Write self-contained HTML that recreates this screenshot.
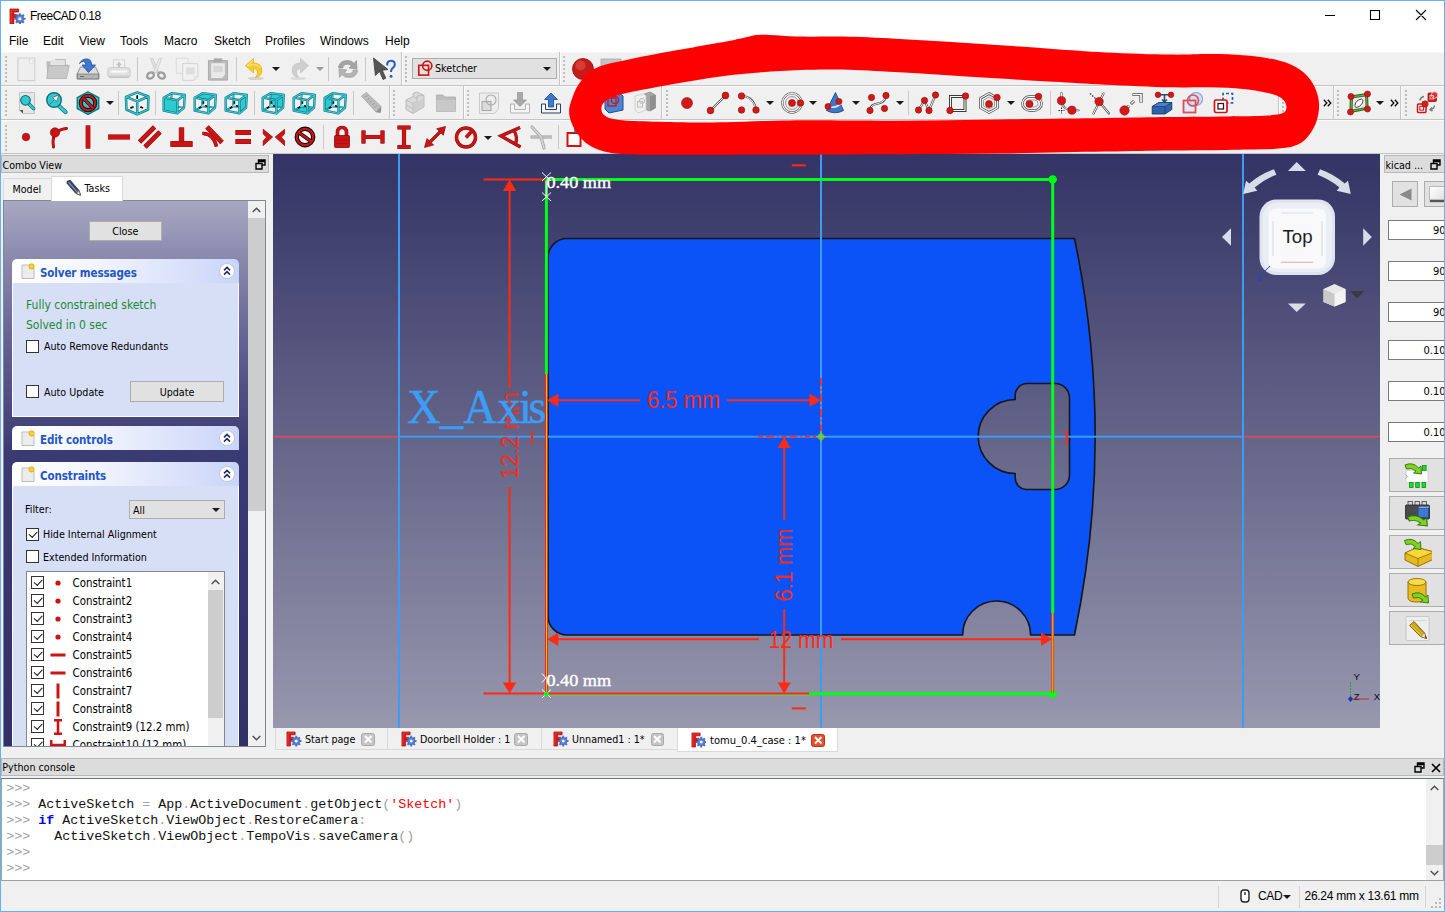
<!DOCTYPE html>
<html>
<head>
<meta charset="utf-8">
<title>FreeCAD 0.18</title>
<style>
*{box-sizing:border-box;margin:0;padding:0}
html,body{width:1445px;height:912px;overflow:hidden;background:#f0f0f0;font-family:"Liberation Sans","DejaVu Sans",sans-serif;font-size:11px;color:#000}
.abs{position:absolute}
#win{position:absolute;left:0;top:0;width:1445px;height:912px;background:#f0f0f0;overflow:hidden}
#bord{position:absolute;left:0;top:0;width:1445px;height:912px;border:1px solid #6ab0f0;z-index:50;pointer-events:none}
#title{position:absolute;left:1px;top:1px;width:1443px;height:30px;background:#fff}
#title .t{position:absolute;left:29px;top:7.3px;font-size:12px;line-height:16px;color:#000;letter-spacing:-0.5px}
#menu{position:absolute;left:1px;top:31px;width:1443px;height:21px;background:#fff}
#menu span{position:absolute;top:3px;font-size:12px;line-height:15px}
.sepH{position:absolute;left:1px;width:1443px;height:1px;background:#c9c9c9}
.tsep{position:absolute;width:1px;height:26px;background:#c6c6c6}
.grip{position:absolute;width:3px;height:26px;background-image:repeating-linear-gradient(to bottom,#b5b5b5 0,#b5b5b5 1px,transparent 1px,transparent 3px)}
.ic{position:absolute;width:24px;height:24px;overflow:visible}
.dd{position:absolute;width:0;height:0;margin-left:-0.500px;border-left:4px solid transparent;border-right:4px solid transparent;border-top:4.500px solid #1a1a1a}
.dd.g{border-top-color:#999}
</style>
</head>
<body>
<div id="win">
<!-- TITLE -->
<div id="title"><svg class="abs" style="left:8px;top:6.500px" width="16.500" height="16.500" viewBox="0 0 17 17"><use href="#fc"/></svg><span class="t">FreeCAD 0.18</span>
<svg class="abs" style="left:1319px;top:5px" width="120" height="20" viewBox="1320 6 120 20"><path d="M1325 15.500 H1335 M1370.500 10.500 H1379.500 V19.500 H1370.500 Z M1416 10 L1426 20 M1426 10 L1416 20" fill="none" stroke="#000" stroke-width="1.100"/></svg></div>
<!-- MENU -->
<div id="menu">
<span style="left:8px">File</span><span style="left:42px">Edit</span><span style="left:78px">View</span><span style="left:119px">Tools</span><span style="left:163px">Macro</span><span style="left:213px">Sketch</span><span style="left:264px">Profiles</span><span style="left:319px">Windows</span><span style="left:384px">Help</span>
</div>
<!-- TOOLBARS -->
<div id="tb"><style>.gr{position:absolute;width:3px;height:26px;width:2px;background-image:linear-gradient(to bottom,#bdbdbd 0,#bdbdbd 1.600px,transparent 1.600px);background-size:2px 4px}</style>
<div class="abs" style="left:1px;top:52px;width:1443px;height:1px;background:#f7f7f7"></div>
<div class="abs" style="left:1px;top:85.0px;width:1443px;height:1px;background:#c4c4c4"></div><div class="abs" style="left:1px;top:86.0px;width:1443px;height:1px;background:#fbfbfb"></div>
<div class="abs" style="left:1px;top:119.0px;width:1443px;height:1px;background:#c4c4c4"></div><div class="abs" style="left:1px;top:120.0px;width:1443px;height:1px;background:#fbfbfb"></div>
<div class="abs" style="left:1px;top:153px;width:1443px;height:1px;background:#c4c4c4"></div>
<div class="gr" style="left:4.5px;top:56.0px"></div>
<svg class="ic" style="left:14px;top:56.5px" viewBox="0 0 24 24"><g transform="translate(12 12) scale(1.16) translate(-12 -12)"><path d="M5 2.5 H19.5 V22 H5 Z" fill="#eeeeee" stroke="#d2d2d2" stroke-width="1"/><path d="M15 2.5 L19.5 7 H15 Z" fill="#f8f8f8" stroke="#d8d8d8" stroke-width=".6"/></g></svg>
<svg class="ic" style="left:45px;top:56.5px" viewBox="0 0 24 24"><g transform="translate(12 12) scale(1.12) translate(-12 -12)"><path d="M2.5 5 H9 L10.5 3 H20 V8 H22 L19.5 20.5 H3.5 Z" fill="#bdbdbd"/><path d="M6 4 H19 V9 H6 Z" fill="#e4e4e4"/><path d="M4.5 9 H23 L20.5 20.5 H2.8 Z" fill="#c9c9c9" stroke="#b0b0b0" stroke-width=".7"/></g></svg>
<svg class="ic" style="left:76.3px;top:56.5px" viewBox="0 0 24 24"><path d="M4.5 10 H19.5 L23 17 V22 H1 V17 Z" fill="#dcdcdc" stroke="#8e8e8e" stroke-width="1"/><path d="M1.5 17 H22.5 V21.8 H1.5 Z" fill="#b4b4b4" stroke="#7c7c7c" stroke-width=".8"/><path d="M4 19.5 H8" stroke="#666" stroke-width="1"/><path d="M3.5 6.5 Q6 1.5 11.5 2 Q15.5 2.5 15.5 8 H19.5 L12.5 15.5 L6 8 H10 Q10 5 7.5 4.5 Q5 4.5 3.5 6.5 Z" fill="#3b78d0" stroke="#1d4c9c" stroke-width=".8"/></svg>
<svg class="ic" style="left:107px;top:56.5px" viewBox="0 0 24 24"><g transform="translate(12 12) scale(1.02) translate(-12 -12)"><path d="M6.5 3 H17.5 V11 H6.5 Z" fill="#f2f2f2" stroke="#cfcfcf" stroke-width=".8"/><path d="M12 5 L15 8 H13.3 V10 H10.7 V8 H9 Z" fill="#c4c4c4"/><path d="M4 10.5 H20 Q23 10.5 23 14 V19 H1 V14 Q1 10.5 4 10.5 Z" fill="#e0e0e0" stroke="#c6c6c6" stroke-width=".8"/><path d="M2 19 H22 V21 H2 Z" fill="#c9c9c9"/><path d="M4 14.5 H20" stroke="#f8f8f8" stroke-width="2"/></g></svg>
<div class="abs" style="left:136.9px;top:56.5px;width:1px;height:24px;background:#c8c8c8"></div>
<svg class="ic" style="left:143.7px;top:56.5px" viewBox="0 0 24 24"><path d="M6.5 1.5 L9 1.5 L14.5 15 L11.8 16 Z" fill="#e2e2e2" stroke="#bdbdbd" stroke-width=".6"/><path d="M17.5 1.5 L15 1.5 L9.5 15 L12.2 16 Z" fill="#ececec" stroke="#bdbdbd" stroke-width=".6"/><ellipse cx="6.5" cy="18.5" rx="3.6" ry="2.8" transform="rotate(-30 6.5 18.5)" fill="none" stroke="#9c9c9c" stroke-width="2.3"/><ellipse cx="17.5" cy="18.5" rx="3.6" ry="2.8" transform="rotate(30 17.5 18.5)" fill="none" stroke="#9c9c9c" stroke-width="2.3"/></svg>
<svg class="ic" style="left:174.7px;top:56.5px" viewBox="0 0 24 24"><g transform="translate(12 12) scale(1.08) translate(-12 -12)"><path d="M2 2 H13 V16 H2 Z" fill="#f0f0f0" stroke="#d6d6d6" stroke-width=".8"/><path d="M8 7 H22 V19 L18.5 22.5 H8 Z" fill="#f1f1f1" stroke="#d0d0d0" stroke-width=".8"/><path d="M11 10.5 H19 V17 H11 Z" fill="#dddddd"/><path d="M18.5 22.5 V19 H22 Z" fill="#fafafa" stroke="#d0d0d0" stroke-width=".6"/></g></svg>
<svg class="ic" style="left:206px;top:56.5px" viewBox="0 0 24 24"><g transform="translate(12 12) scale(1.06) translate(-12 -12)"><path d="M3 4 H21 V22.5 H3 Z" fill="#bcbcbc" stroke="#a4a4a4" stroke-width=".8"/><path d="M5.5 6.5 H18.5 V17.5 L15.5 20.5 H5.5 Z" fill="#e9e9e9"/><path d="M8 2 H16 V5.5 H8 Z" fill="#a9a9a9"/><path d="M7.5 9 H16.5 V15 H7.5 Z" fill="#d6d6d6"/></g></svg>
<div class="abs" style="left:235.9px;top:56.5px;width:1px;height:24px;background:#c8c8c8"></div>
<svg class="ic" style="left:242.5px;top:56.5px" viewBox="0 0 24 24"><ellipse cx="13" cy="21.5" rx="8" ry="1.6" fill="#d2d2d2"/><path d="M10.5 1.5 L10.5 6 Q18.5 6 18.8 13 Q19 19.5 12.5 20.5 Q15.2 17.5 14.5 14.2 Q13.8 11.5 10.5 11.5 L10.5 16 L2.5 8.6 Z" fill="#f4cd2a" stroke="#e0b010" stroke-width=".7"/><path d="M10.5 3 L4 8.6 L10.5 7.5 Q16 7.5 17.5 11" fill="none" stroke="#fbe98a" stroke-width="1"/></svg>
<div class="dd" style="left:272.8px;top:67.0px"></div>
<svg class="ic" style="left:286.5px;top:56.5px" viewBox="0 0 24 24"><ellipse cx="11" cy="21.5" rx="8" ry="1.6" fill="#dcdcdc"/><path d="M13.5 1.5 L13.5 6 Q5.5 6 5.2 13 Q5 19.5 11.5 20.5 Q8.8 17.5 9.5 14.2 Q10.2 11.5 13.5 11.5 L13.5 16 L21.5 8.6 Z" fill="#cfcfcf" stroke="#c0c0c0" stroke-width=".7"/></svg>
<div class="dd g" style="left:316.0px;top:67.0px"></div>
<div class="abs" style="left:327.8px;top:56.5px;width:1px;height:24px;background:#c8c8c8"></div>
<svg class="ic" style="left:335.5px;top:56.5px" viewBox="0 0 24 24"><path d="M2.5 11 Q3 3.5 11.5 3.5 Q16 3.5 18 6.5 L20.5 3.5 L21 12 L13 11 L15.5 8.8 Q13.8 7 11.5 7.2 Q7 7.5 6.8 11 Z" fill="#a4a4a4" stroke="#8c8c8c" stroke-width=".6"/><path d="M21.5 13 Q21 20.5 12.5 20.5 Q8 20.5 6 17.5 L3.5 20.5 L3 12 L11 13 L8.5 15.2 Q10.2 17 12.5 16.8 Q17 16.5 17.2 13 Z" fill="#b4b4b4" stroke="#949494" stroke-width=".6"/></svg>
<div class="abs" style="left:365.2px;top:56.5px;width:1px;height:24px;background:#c8c8c8"></div>
<svg class="ic" style="left:372.3px;top:56.5px" viewBox="0 0 24 24"><path d="M1.5 1 L16 12.5 L10.3 13.2 L13.8 21.2 L11 22.5 L7.6 14.5 L3.4 18.5 Z" fill="#555" stroke="#3c3c3c" stroke-width=".8"/><path d="M15.2 8.5 Q14.8 3.8 19 3.8 Q22.8 3.8 22.8 7.5 Q22.8 9.8 20.4 11.4 Q19 12.4 19 15" fill="none" stroke="#2a5fc0" stroke-width="2.1"/><circle cx="19" cy="19.3" r="1.5" fill="#2a5fc0"/></svg>
<div class="abs" style="left:401.2px;top:52.0px;width:1px;height:33px;background:#c4c4c4"></div><div class="abs" style="left:402.2px;top:52.0px;width:1px;height:33px;background:#fbfbfb"></div>
<div class="gr" style="left:405.2px;top:56.0px"></div>
<div class="abs" style="left:559.0px;top:52.0px;width:1px;height:33px;background:#c4c4c4"></div><div class="abs" style="left:560.0px;top:52.0px;width:1px;height:33px;background:#fbfbfb"></div>
<div class="gr" style="left:563.0px;top:56.0px"></div>
<svg class="ic" style="left:571px;top:56.5px" viewBox="0 0 24 24"><circle cx="12" cy="12" r="10.500" fill="#c81a1a" stroke="#8c1010" stroke-width=".8"/><circle cx="9.5" cy="8.5" r="5" fill="#e85a4a" opacity=".55"/></svg>
<svg class="ic" style="left:599px;top:56.5px" viewBox="0 0 24 24"><rect x="2" y="2" width="20" height="20" fill="#c4c4c4" stroke="#aaa" stroke-width=".8"/></svg>
<div class="gr" style="left:4.5px;top:90.0px"></div>
<svg class="ic" style="left:14px;top:90.5px" viewBox="0 0 24 24"><path d="M5.5 1.5 H20.5 V22.5 H9 L5.5 19 Z" fill="#e6e6e6" stroke="#bdbdbd" stroke-width=".9"/><path d="M5.5 19 H9 V22.5 Z" fill="#555"/><path d="M14 12 L19.5 17.5" stroke="#14707c" stroke-width="3.6" stroke-linecap="round"/><path d="M14 12 L19.5 17.5" stroke="#2fc9d2" stroke-width="2.2" stroke-linecap="round"/><circle cx="11.5" cy="9.3" r="4.8" fill="#2fc9d2" stroke="#14707c" stroke-width="1.2"/></svg>
<svg class="ic" style="left:44px;top:90.5px" viewBox="0 0 24 24"><path d="M14.5 14.5 L21.5 21" stroke="#14707c" stroke-width="4.2" stroke-linecap="round"/><path d="M14.5 14.5 L21.5 21" stroke="#2fc9d2" stroke-width="2.6" stroke-linecap="round"/><circle cx="10" cy="9" r="7.3" fill="#2fc9d2" stroke="#14707c" stroke-width="1.4"/><path d="M5.5 13.5 L10.5 8.5 L8.5 6.5 L15 4 L12.5 10.5 L10.8 8.8" fill="#f4f4f4" stroke="#555" stroke-width=".7"/></svg>
<svg class="ic" style="left:76px;top:90.5px" viewBox="0 0 24 24"><path d="M12 0.8 L22.8 6.6 V17.6 L12 23.4 L1.2 17.6 V6.6 Z" fill="#2fc9d2" stroke="#14707c" stroke-width="1.3"/><circle cx="12" cy="12" r="7.2" fill="none" stroke="#1a1a1a" stroke-width="4.2"/><circle cx="12" cy="12" r="7.2" fill="none" stroke="#d21616" stroke-width="2"/><path d="M7 7 L17 17" stroke="#1a1a1a" stroke-width="3.6"/><path d="M7 7 L17 17" stroke="#d21616" stroke-width="2.2"/></svg>
<div class="dd" style="left:106.1px;top:101.0px"></div>
<div class="abs" style="left:117.8px;top:90.5px;width:1px;height:24px;background:#c8c8c8"></div>
<svg class="ic" style="left:125px;top:90.5px" viewBox="0 0 24 24"><path d="M12.2 1.400 L23.400 5.500 L23 18.500 L12.200 23.300 L1.400 18.500 L1 5.900 Z M1 5.900 L12.200 10.400 L23.400 5.500 M12.200 10.400 V23.300" fill="none" stroke="#14707c" stroke-width="2.500" stroke-linejoin="round"/><path d="M12.200 1.400 L23.400 5.500 L23 18.500 L12.200 23.300 L1.400 18.500 L1 5.900 Z M1 5.900 L12.200 10.400 L23.400 5.500 M12.200 10.400 V23.300" fill="none" stroke="#2fc9d2" stroke-width="1.300" stroke-linejoin="round"/><path d="M12.200 4.300 V8 M5.400 17.100 L8.600 15.700 M15.300 15.900 L18 17" stroke="#0a0a0a" stroke-width="1.700"/></svg>
<div class="abs" style="left:154.8px;top:90.5px;width:1px;height:24px;background:#c8c8c8"></div>
<svg class="ic" style="left:162px;top:90.5px" viewBox="0 0 24 24"><g transform="translate(12 12.300) scale(0.930) translate(-12 -12.300)"><path d="M9.4 1.4 L9 15.6 L0.9 20.2 M9 15.6 L22.8 17" fill="none" stroke="#14707c" stroke-width="2"/><path d="M9.4 1.4 L9 15.6 L0.9 20.2 M9 15.6 L22.8 17" fill="none" stroke="#2fc9d2" stroke-width="1"/><path d="M0.9 6.3 L15.7 9 L15.7 23.2 L0.9 20.2 Z" fill="#2fc9d2"/><path d="M0.9 6.3 L15.7 9 L15.7 23.2 L0.9 20.2 Z M0.9 6.3 L15.7 9 L23.6 3.2 L9.4 1.4 Z M15.7 9 L23.6 3.2 L22.8 17 L15.7 23.2 Z" fill="none" stroke="#14707c" stroke-width="2.500" stroke-linejoin="round"/><path d="M0.9 6.3 L15.7 9 L15.7 23.2 L0.9 20.2 Z M0.9 6.3 L15.7 9 L23.6 3.2 L9.4 1.4 Z M15.7 9 L23.6 3.2 L22.8 17 L15.7 23.2 Z" fill="none" stroke="#2fc9d2" stroke-width="1.300" stroke-linejoin="round"/></g></svg>
<svg class="ic" style="left:193px;top:90.5px" viewBox="0 0 24 24"><g transform="translate(12 12.300) scale(0.930) translate(-12 -12.300)"><path d="M9.4 1.4 L9 15.6 L0.9 20.2 M9 15.6 L22.8 17" fill="none" stroke="#14707c" stroke-width="2"/><path d="M9.4 1.4 L9 15.6 L0.9 20.2 M9 15.6 L22.8 17" fill="none" stroke="#2fc9d2" stroke-width="1"/><path d="M10.4 14.4 V10.6 M10.4 14.4 L5.600 17.500 M10.400 14.400 L14 15.400" stroke="#9fd8f0" stroke-width="1.100" fill="none"/><path d="M10.300 12.800 V10.200 M8.100 16 L5.400 17.600 M12 14.900 L14.200 15.500" stroke="#0a0a0a" stroke-width="1.700" fill="none"/><path d="M0.9 6.3 L15.7 9 L23.6 3.2 L9.4 1.4 Z" fill="#2fc9d2"/><path d="M0.9 6.3 L15.7 9 L15.7 23.2 L0.9 20.2 Z M0.9 6.3 L15.7 9 L23.6 3.2 L9.4 1.4 Z M15.7 9 L23.6 3.2 L22.8 17 L15.7 23.2 Z" fill="none" stroke="#14707c" stroke-width="2.500" stroke-linejoin="round"/><path d="M0.9 6.3 L15.7 9 L15.7 23.2 L0.9 20.2 Z M0.9 6.3 L15.7 9 L23.6 3.2 L9.4 1.4 Z M15.7 9 L23.6 3.2 L22.8 17 L15.7 23.2 Z" fill="none" stroke="#2fc9d2" stroke-width="1.300" stroke-linejoin="round"/></g></svg>
<svg class="ic" style="left:223.6px;top:90.5px" viewBox="0 0 24 24"><g transform="translate(12 12.300) scale(0.930) translate(-12 -12.300)"><path d="M9.4 1.4 L9 15.6 L0.9 20.2 M9 15.6 L22.8 17" fill="none" stroke="#14707c" stroke-width="2"/><path d="M9.4 1.4 L9 15.6 L0.9 20.2 M9 15.6 L22.8 17" fill="none" stroke="#2fc9d2" stroke-width="1"/><path d="M10.4 14.4 V10.6 M10.4 14.4 L5.600 17.500 M10.400 14.400 L14 15.400" stroke="#9fd8f0" stroke-width="1.100" fill="none"/><path d="M10.300 12.800 V10.200 M8.100 16 L5.400 17.600 M12 14.900 L14.200 15.500" stroke="#0a0a0a" stroke-width="1.700" fill="none"/><path d="M15.7 9 L23.6 3.2 L22.8 17 L15.7 23.2 Z" fill="#2fc9d2"/><path d="M0.9 6.3 L15.7 9 L15.7 23.2 L0.9 20.2 Z M0.9 6.3 L15.7 9 L23.6 3.2 L9.4 1.4 Z M15.7 9 L23.6 3.2 L22.8 17 L15.7 23.2 Z" fill="none" stroke="#14707c" stroke-width="2.500" stroke-linejoin="round"/><path d="M0.9 6.3 L15.7 9 L15.7 23.2 L0.9 20.2 Z M0.9 6.3 L15.7 9 L23.6 3.2 L9.4 1.4 Z M15.7 9 L23.6 3.2 L22.8 17 L15.7 23.2 Z" fill="none" stroke="#2fc9d2" stroke-width="1.300" stroke-linejoin="round"/></g></svg>
<div class="abs" style="left:253.5px;top:90.5px;width:1px;height:24px;background:#c8c8c8"></div>
<svg class="ic" style="left:260.8px;top:90.5px" viewBox="0 0 24 24"><g transform="translate(12 12.300) scale(0.930) translate(-12 -12.300)"><path d="M9.4 1.4 L23.6 3.2 L22.8 17 L9 15.6 Z" fill="#2fc9d2"/><path d="M9.4 1.4 L9 15.6 L0.9 20.2 M9 15.6 L22.8 17" fill="none" stroke="#14707c" stroke-width="2"/><path d="M9.4 1.4 L9 15.6 L0.9 20.2 M9 15.6 L22.8 17" fill="none" stroke="#2fc9d2" stroke-width="1"/><path d="M10.4 14.4 V10.6 M10.4 14.4 L5.600 17.500 M10.400 14.400 L14 15.400" stroke="#9fd8f0" stroke-width="1.100" fill="none"/><path d="M10.300 12.800 V10.200 M8.100 16 L5.400 17.600 M12 14.900 L14.200 15.500" stroke="#0a0a0a" stroke-width="1.700" fill="none"/><path d="M0.9 6.3 L15.7 9 L15.7 23.2 L0.9 20.2 Z M0.9 6.3 L15.7 9 L23.6 3.2 L9.4 1.4 Z M15.7 9 L23.6 3.2 L22.8 17 L15.7 23.2 Z" fill="none" stroke="#14707c" stroke-width="2.500" stroke-linejoin="round"/><path d="M0.9 6.3 L15.7 9 L15.7 23.2 L0.9 20.2 Z M0.9 6.3 L15.7 9 L23.6 3.2 L9.4 1.4 Z M15.7 9 L23.6 3.2 L22.8 17 L15.7 23.2 Z" fill="none" stroke="#2fc9d2" stroke-width="1.300" stroke-linejoin="round"/></g></svg>
<svg class="ic" style="left:291.6px;top:90.5px" viewBox="0 0 24 24"><g transform="translate(12 12.300) scale(0.930) translate(-12 -12.300)"><path d="M0.9 20.2 L15.7 23.2 L22.8 17 L9 15.6 Z" fill="#2fc9d2"/><path d="M9.4 1.4 L9 15.6 L0.9 20.2 M9 15.6 L22.8 17" fill="none" stroke="#14707c" stroke-width="2"/><path d="M9.4 1.4 L9 15.6 L0.9 20.2 M9 15.6 L22.8 17" fill="none" stroke="#2fc9d2" stroke-width="1"/><path d="M10.4 14.4 V10.6 M10.4 14.4 L5.600 17.500 M10.400 14.400 L14 15.400" stroke="#9fd8f0" stroke-width="1.100" fill="none"/><path d="M10.300 12.800 V10.200 M8.100 16 L5.400 17.600 M12 14.900 L14.200 15.500" stroke="#0a0a0a" stroke-width="1.700" fill="none"/><path d="M0.9 6.3 L15.7 9 L15.7 23.2 L0.9 20.2 Z M0.9 6.3 L15.7 9 L23.6 3.2 L9.4 1.4 Z M15.7 9 L23.6 3.2 L22.8 17 L15.7 23.2 Z" fill="none" stroke="#14707c" stroke-width="2.500" stroke-linejoin="round"/><path d="M0.9 6.3 L15.7 9 L15.7 23.2 L0.9 20.2 Z M0.9 6.3 L15.7 9 L23.6 3.2 L9.4 1.4 Z M15.7 9 L23.6 3.2 L22.8 17 L15.7 23.2 Z" fill="none" stroke="#2fc9d2" stroke-width="1.300" stroke-linejoin="round"/></g></svg>
<svg class="ic" style="left:322.6px;top:90.5px" viewBox="0 0 24 24"><g transform="translate(12 12.300) scale(0.930) translate(-12 -12.300)"><path d="M0.9 6.3 L9.4 1.4 L9 15.6 L0.9 20.2 Z" fill="#2fc9d2"/><path d="M9.4 1.4 L9 15.6 L0.9 20.2 M9 15.6 L22.8 17" fill="none" stroke="#14707c" stroke-width="2"/><path d="M9.4 1.4 L9 15.6 L0.9 20.2 M9 15.6 L22.8 17" fill="none" stroke="#2fc9d2" stroke-width="1"/><path d="M10.4 14.4 V10.6 M10.4 14.4 L5.600 17.500 M10.400 14.400 L14 15.400" stroke="#9fd8f0" stroke-width="1.100" fill="none"/><path d="M10.300 12.800 V10.200 M8.100 16 L5.400 17.600 M12 14.900 L14.200 15.500" stroke="#0a0a0a" stroke-width="1.700" fill="none"/><path d="M0.9 6.3 L15.7 9 L15.7 23.2 L0.9 20.2 Z M0.9 6.3 L15.7 9 L23.6 3.2 L9.4 1.4 Z M15.7 9 L23.6 3.2 L22.8 17 L15.7 23.2 Z" fill="none" stroke="#14707c" stroke-width="2.500" stroke-linejoin="round"/><path d="M0.9 6.3 L15.7 9 L15.7 23.2 L0.9 20.2 Z M0.9 6.3 L15.7 9 L23.6 3.2 L9.4 1.4 Z M15.7 9 L23.6 3.2 L22.8 17 L15.7 23.2 Z" fill="none" stroke="#2fc9d2" stroke-width="1.300" stroke-linejoin="round"/></g></svg>
<div class="abs" style="left:352.7px;top:90.5px;width:1px;height:24px;background:#c8c8c8"></div>
<svg class="ic" style="left:359px;top:90.5px" viewBox="0 0 24 24"><path d="M2.5 5 L7.5 1.5 L22 15.5 L21.5 21.5 L17 21 Z" fill="#bdbdbd" stroke="#a2a2a2" stroke-width=".8"/><path d="M17 21 L21.5 21.5 L22 15.5 Z" fill="#8f8f8f"/><path d="M6 6.5 L8 4.5 M8.5 9 L10.5 7 M11 11.5 L13 9.5 M13.5 14 L15.5 12 M16 16.5 L18 14.5" stroke="#8c8c8c" stroke-width=".9"/></svg>
<div class="abs" style="left:389.1px;top:86.0px;width:1px;height:33px;background:#c4c4c4"></div><div class="abs" style="left:390.1px;top:86.0px;width:1px;height:33px;background:#fbfbfb"></div>
<div class="gr" style="left:393.1px;top:90.0px"></div>
<svg class="ic" style="left:403px;top:90.5px" viewBox="0 0 24 24"><path d="M3 9 L10 5.5 V2.5 L14 1 L21 4.5 V16 L10 22.5 L3 18.5 Z" fill="#dadada" stroke="#b4b4b4" stroke-width=".9"/><path d="M3 9 L10 12.5 V22.5 M10 12.5 L14 10.5 V5 L21 4.5 M10 5.5 L14 7.5 M3 14 L10 17.5" fill="none" stroke="#b9b9b9" stroke-width=".8"/><path d="M14 10.500 L21 7.5 V16 L10 22.5 V12.5 Z" fill="#c9c9c9" opacity=".7"/></svg>
<svg class="ic" style="left:434px;top:90.5px" viewBox="0 0 24 24"><path d="M2.5 4 H9 L10.500 6 H21.5 V20.5 H2.5 Z" fill="#bdbdbd" stroke="#ababab" stroke-width=".8"/><path d="M2.5 9 H21.5 V20.5 H2.5 Z" fill="#c8c8c8"/></svg>
<div class="abs" style="left:463.1px;top:86.0px;width:1px;height:33px;background:#c4c4c4"></div><div class="abs" style="left:464.1px;top:86.0px;width:1px;height:33px;background:#fbfbfb"></div>
<div class="gr" style="left:467.1px;top:90.0px"></div>
<svg class="ic" style="left:477px;top:90.5px" viewBox="0 0 24 24"><path d="M2.5 2 H21.5 V18 L17.5 22.5 H2.5 Z" fill="#ededed" stroke="#c6c6c6" stroke-width=".9"/><rect x="5" y="10.500" width="9" height="9" fill="#dcdcdc" stroke="#a8a8a8" stroke-width="1.1"/><circle cx="14" cy="9" r="5" fill="none" stroke="#a8a8a8" stroke-width="1.1"/></svg>
<svg class="ic" style="left:508px;top:90.5px" viewBox="0 0 24 24"><path d="M2.5 13 H6.5 V18.5 H17.5 V13 H21.5 V22 H2.5 Z" fill="#f4f4f4" stroke="#b4b4b4" stroke-width="1"/><path d="M9.500 1.500 H14.500 V9 H18.500 L12 15.500 L5.500 9 H9.500 Z" fill="#a9a9a9" stroke="#929292" stroke-width=".7"/></svg>
<svg class="ic" style="left:539px;top:90.5px" viewBox="0 0 24 24"><path d="M2.500 13 H6.500 V18.500 H17.500 V13 H21.500 V22 H2.500 Z" fill="#f4f4f4" stroke="#2c3e5c" stroke-width="1"/><path d="M9.500 16 H14.500 V8.500 H18.500 L12 2 L5.500 8.500 H9.500 Z" fill="#3b7ad0" stroke="#1c468c" stroke-width=".8"/></svg>
<svg class="ic" style="left:601.5px;top:90.5px" viewBox="0 0 24 24"><path d="M3 4 L17 2 L21 5 V19 L7 22 L3 18 Z" fill="#4a86d4" stroke="#1e4a94" stroke-width="1"/><rect x="6" y="7" width="8" height="8" fill="none" stroke="#cc1414" stroke-width="1.300"/><circle cx="13" cy="9" r="3.600" fill="none" stroke="#cc1414" stroke-width="1.300"/></svg>
<svg class="ic" style="left:632.5px;top:90.5px" viewBox="0 0 24 24"><path d="M11 3 L17 1 L22.500 4 V17 L17 20 L11 18 Z" fill="#a6a6a6" stroke="#8c8c8c" stroke-width=".7"/><path d="M17 5 L22.500 4 V17 L17 20 Z" fill="#8f8f8f"/><path d="M2 5 L11 3 L13 5 V19 L5 22 L2 19 Z" fill="#f0f0f0" stroke="#c9c9c9" stroke-width=".8"/><rect x="4.500" y="10.500" width="5" height="5.500" fill="none" stroke="#bdbdbd" stroke-width="1"/><circle cx="9" cy="10" r="2.600" fill="none" stroke="#bdbdbd" stroke-width="1"/></svg>
<div class="abs" style="left:661.1px;top:86.0px;width:1px;height:33px;background:#c4c4c4"></div><div class="abs" style="left:662.1px;top:86.0px;width:1px;height:33px;background:#fbfbfb"></div>
<div class="gr" style="left:665.5px;top:90.0px"></div>
<svg class="ic" style="left:674.5px;top:90.5px" viewBox="0 0 24 24"><circle cx="12" cy="12" r="5.5" fill="#d41818" stroke="#8a0e0e" stroke-width="0.6"/></svg>
<svg class="ic" style="left:705.5px;top:90.5px" viewBox="0 0 24 24"><path d="M4.500 19.500 L19.500 4.500" fill="none" stroke="#4a4a4a" stroke-width="2.15" stroke-linecap="round"/><path d="M4.500 19.500 L19.500 4.500" fill="none" stroke="#f8f8f8" stroke-width="1" stroke-linecap="round"/><circle cx="4.5" cy="19.5" r="3.39" fill="#d41818" stroke="#8a0e0e" stroke-width="0.6"/><circle cx="19.5" cy="4.5" r="3.39" fill="#d41818" stroke="#8a0e0e" stroke-width="0.6"/></svg>
<svg class="ic" style="left:736.5px;top:90.5px" viewBox="0 0 24 24"><path d="M4.500 5 Q17 5.500 19 19" fill="none" stroke="#4a4a4a" stroke-width="2.15" stroke-linecap="round"/><path d="M4.500 5 Q17 5.500 19 19" fill="none" stroke="#f8f8f8" stroke-width="1" stroke-linecap="round"/><circle cx="4.5" cy="5" r="3.28" fill="#d41818" stroke="#8a0e0e" stroke-width="0.6"/><circle cx="19" cy="19" r="3.28" fill="#d41818" stroke="#8a0e0e" stroke-width="0.6"/><circle cx="4.5" cy="19" r="3.28" fill="#d41818" stroke="#8a0e0e" stroke-width="0.6"/></svg>
<div class="dd" style="left:766.5px;top:101.0px"></div>
<svg class="ic" style="left:779.5px;top:90.5px" viewBox="0 0 24 24"><circle cx="12" cy="12" r="9.600" fill="none" stroke="#4a4a4a" stroke-width="2.200"/><circle cx="12" cy="12" r="9.600" fill="none" stroke="#f8f8f8" stroke-width="1.100"/><circle cx="12" cy="12" r="6.400" fill="none" stroke="#7c7c7c" stroke-width=".8"/><circle cx="12" cy="12" r="3.51" fill="#d41818" stroke="#8a0e0e" stroke-width="0.6"/><circle cx="20.5" cy="12" r="3.28" fill="#d41818" stroke="#8a0e0e" stroke-width="0.6"/></svg>
<div class="dd" style="left:809.8px;top:101.0px"></div>
<svg class="ic" style="left:822.5px;top:90.5px" viewBox="0 0 24 24"><path d="M12.500 1.500 L20.500 19.500 Q12 24 3.500 19.500 Z" fill="#3e78c8" stroke="#1f4788" stroke-width=".9"/><path d="M5 15 Q13 19 19.500 10.500" fill="none" stroke="#eef2fa" stroke-width="1.600"/><circle cx="5" cy="15.5" r="3.04" fill="#d41818" stroke="#8a0e0e" stroke-width="0.6"/><circle cx="16" cy="10.5" r="3.04" fill="#d41818" stroke="#8a0e0e" stroke-width="0.6"/></svg>
<div class="dd" style="left:852.8px;top:101.0px"></div>
<svg class="ic" style="left:865.8px;top:90.5px" viewBox="0 0 24 24"><path d="M4 19.500 C4 9 19 16.500 20 4.500" fill="none" stroke="#4a4a4a" stroke-width="2.15" stroke-linecap="round"/><path d="M4 19.500 C4 9 19 16.500 20 4.500" fill="none" stroke="#f8f8f8" stroke-width="1" stroke-linecap="round"/><circle cx="4" cy="19.5" r="3.16" fill="#d41818" stroke="#8a0e0e" stroke-width="0.6"/><circle cx="20" cy="4.5" r="3.16" fill="#d41818" stroke="#8a0e0e" stroke-width="0.6"/><circle cx="5.5" cy="6.5" r="3.16" fill="#d41818" stroke="#8a0e0e" stroke-width="0.6"/><circle cx="18.5" cy="17.5" r="3.16" fill="#d41818" stroke="#8a0e0e" stroke-width="0.6"/></svg>
<div class="dd" style="left:896.0px;top:101.0px"></div>
<div class="abs" style="left:908.3px;top:90.5px;width:1px;height:24px;background:#c8c8c8"></div>
<svg class="ic" style="left:915.3px;top:90.5px" viewBox="0 0 24 24"><path d="M3.500 19 L9.500 9.500 L14 19.500 L20.500 4" fill="none" stroke="#4a4a4a" stroke-width="2.15" stroke-linecap="round"/><path d="M3.500 19 L9.500 9.500 L14 19.500 L20.500 4" fill="none" stroke="#f8f8f8" stroke-width="1" stroke-linecap="round"/><circle cx="3.5" cy="19" r="3.16" fill="#d41818" stroke="#8a0e0e" stroke-width="0.6"/><circle cx="9.5" cy="9.5" r="3.16" fill="#d41818" stroke="#8a0e0e" stroke-width="0.6"/><circle cx="14" cy="19.5" r="3.16" fill="#d41818" stroke="#8a0e0e" stroke-width="0.6"/><circle cx="20.5" cy="4" r="3.16" fill="#d41818" stroke="#8a0e0e" stroke-width="0.6"/></svg>
<svg class="ic" style="left:946.3px;top:90.5px" viewBox="0 0 24 24"><path d="M4.500 5.500 H19 V19.500 H4.500 Z" fill="none" stroke="#3a3a3a" stroke-width="3"/><path d="M4.500 5.500 H19 V19.500 H4.500 Z" fill="none" stroke="#fafafa" stroke-width="1.100"/><circle cx="4" cy="19.5" r="3.28" fill="#d41818" stroke="#8a0e0e" stroke-width="0.6"/><circle cx="19.5" cy="5" r="3.28" fill="#d41818" stroke="#8a0e0e" stroke-width="0.6"/></svg>
<svg class="ic" style="left:977px;top:90.5px" viewBox="0 0 24 24"><path d="M12 2.500 L20.500 7.300 V16.800 L12 21.500 L3.500 16.800 V7.300 Z" fill="none" stroke="#4a4a4a" stroke-width="2.600"/><path d="M12 2.500 L20.500 7.300 V16.800 L12 21.500 L3.500 16.800 V7.300 Z" fill="none" stroke="#f8f8f8" stroke-width="1.200"/><path d="M12 6 L17.500 9.200 V15 L12 18 L6.500 15 V9.200 Z" fill="none" stroke="#8a8a8a" stroke-width=".8"/><circle cx="12" cy="13" r="3.51" fill="#d41818" stroke="#8a0e0e" stroke-width="0.6"/><circle cx="20" cy="6.5" r="3.28" fill="#d41818" stroke="#8a0e0e" stroke-width="0.6"/></svg>
<div class="dd" style="left:1007.3px;top:101.0px"></div>
<svg class="ic" style="left:1020px;top:90.5px" viewBox="0 0 24 24"><rect x="2.500" y="5.500" width="19" height="14" rx="7" ry="7" fill="none" stroke="#4a4a4a" stroke-width="2.600"/><rect x="2.500" y="5.500" width="19" height="14" rx="7" ry="7" fill="none" stroke="#f8f8f8" stroke-width="1.200"/><rect x="6" y="9" width="12" height="7" rx="3.500" ry="3.500" fill="none" stroke="#8a8a8a" stroke-width=".8"/><circle cx="9.5" cy="13" r="3.51" fill="#d41818" stroke="#8a0e0e" stroke-width="0.6"/><circle cx="18.5" cy="5.5" r="3.28" fill="#d41818" stroke="#8a0e0e" stroke-width="0.6"/></svg>
<div class="abs" style="left:1050.3px;top:90.5px;width:1px;height:24px;background:#c8c8c8"></div>
<svg class="ic" style="left:1056px;top:90.5px" viewBox="0 0 24 24"><path d="M5.500 2 V9.500 Q6 18.500 16 19.200 H22.500" fill="none" stroke="#4a4a4a" stroke-width="2.15" stroke-linecap="round"/><path d="M5.500 2 V9.500 Q6 18.500 16 19.200 H22.500" fill="none" stroke="#f8f8f8" stroke-width="1" stroke-linecap="round"/><path d="M2.500 19.500 H8.500 M5.500 16.500 V22.500" stroke="#222" stroke-width="1" stroke-dasharray="1.500 1"/><circle cx="5.5" cy="9.7" r="4.09" fill="#d41818" stroke="#8a0e0e" stroke-width="0.6"/><circle cx="15.9" cy="19.2" r="4.09" fill="#d41818" stroke="#8a0e0e" stroke-width="0.6"/></svg>
<svg class="ic" style="left:1087px;top:90.5px" viewBox="0 0 24 24"><path d="M12 10.500 L22 22.500" fill="none" stroke="#4a4a4a" stroke-width="2.15" stroke-linecap="round"/><path d="M12 10.500 L22 22.500" fill="none" stroke="#f8f8f8" stroke-width="1" stroke-linecap="round"/><path d="M16.500 2.500 L6.500 22.500" fill="none" stroke="#4a4a4a" stroke-width="2.15" stroke-linecap="round"/><path d="M16.500 2.500 L6.500 22.500" fill="none" stroke="#f8f8f8" stroke-width="1" stroke-linecap="round"/><path d="M3 2.500 L10 9" stroke="#333" stroke-width="1.300" stroke-dasharray="1.500 1.500"/><circle cx="12.1" cy="10.6" r="4.21" fill="#d41818" stroke="#8a0e0e" stroke-width="0.6"/></svg>
<svg class="ic" style="left:1118.5px;top:90.5px" viewBox="0 0 24 24"><path d="M7 18 L16 9" stroke="#4a4a4a" stroke-width="2.900" stroke-dasharray="4.500 2.500"/><path d="M7.500 17.500 L15.500 9.500" stroke="#f8f8f8" stroke-width="1.400" stroke-dasharray="3.800 3.200"/><path d="M13.500 3.500 H22 V11.500" fill="none" stroke="#4a4a4a" stroke-width="3.200"/><path d="M14 3.500 H22 V11" fill="none" stroke="#f8f8f8" stroke-width="1.700"/><circle cx="5.5" cy="19.5" r="4.68" fill="#d41818" stroke="#8a0e0e" stroke-width="0.6"/></svg>
<svg class="ic" style="left:1149.5px;top:90.5px" viewBox="0 0 24 24"><path d="M2.200 15.500 L9 11.500 H21.800 V18.500 L15 23 H2.200 Z" fill="#2f62a8" stroke="#1a3a6e" stroke-width=".9"/><path d="M2.200 15.500 L9 11.500 H21.800 L15 15.500 Z" fill="#4c82cc" stroke="#1a3a6e" stroke-width=".7"/><path d="M15 15.500 V23" stroke="#1a3a6e" stroke-width=".8"/><path d="M8 3.800 H21 M14.500 3.800 V10.500 M12 8.500 L14.500 11 L17 8.500" fill="none" stroke="#2c4a74" stroke-width="1.600"/><circle cx="8" cy="3.8" r="2.81" fill="#d41818" stroke="#8a0e0e" stroke-width="0.6"/><circle cx="21" cy="3.8" r="2.81" fill="#d41818" stroke="#8a0e0e" stroke-width="0.6"/></svg>
<svg class="ic" style="left:1180.5px;top:90.5px" viewBox="0 0 24 24"><circle cx="15" cy="8" r="6.500" fill="#cfe0f6" stroke="#7fa6dc" stroke-width="1.200"/><rect x="2.500" y="9.500" width="12" height="12" fill="#dbe6f6" fill-opacity=".7" stroke="#dc4e58" stroke-width="1.800"/><circle cx="12" cy="9.500" r="5.500" fill="none" stroke="#dc4e58" stroke-width="1.600"/></svg>
<svg class="ic" style="left:1212px;top:90.5px" viewBox="0 0 24 24"><path d="M11 9.500 V2.500 H20.500 V12 H14" fill="none" stroke="#2a5aa8" stroke-width="1.600" stroke-dasharray="3 2"/><rect x="2.500" y="9" width="12.500" height="12.500" rx="1.500" fill="#fff" stroke="#cc1414" stroke-width="1.700"/><rect x="6" y="12.500" width="5.500" height="5.500" fill="#fff" stroke="#3a1414" stroke-width="1.300"/></svg>
<div class="abs" style="left:1278.2px;top:86.0px;width:1px;height:33px;background:#c4c4c4"></div><div class="abs" style="left:1279.2px;top:86.0px;width:1px;height:33px;background:#fbfbfb"></div>
<div class="gr" style="left:1281.5px;top:90.0px"></div>
<svg class="abs" style="left:1322.5px;top:99.0px" width="9" height="8" viewBox="0 0 9 8"><path d="M0.8 0.8 L3.8 4 L0.8 7.2 M4.800 0.8 L7.800 4 L4.800 7.200" fill="none" stroke="#111" stroke-width="1.400"/></svg>
<div class="abs" style="left:1332.8px;top:86.0px;width:1px;height:33px;background:#c4c4c4"></div><div class="abs" style="left:1333.8px;top:86.0px;width:1px;height:33px;background:#fbfbfb"></div>
<div class="gr" style="left:1337.3px;top:90.0px"></div>
<svg class="ic" style="left:1346.8px;top:90.5px" viewBox="0 0 24 24"><path d="M3.500 5 L20.500 2.500 L21 18 L3 21.500 Z" fill="#6ab43c" stroke="#2f6e14" stroke-width="1.200"/><path d="M5.500 7 L18.500 5 L19 16.500 L5.200 19 Z" fill="#e9e9e9" stroke="#333" stroke-width=".7"/><path d="M8 14 Q8.500 9.500 14.500 8 Q17 8.500 15.500 12 Q13 16.500 9 16.500 Q7.600 16 8 14 Z" fill="#fff" stroke="#333" stroke-width=".9"/><circle cx="4" cy="5.5" r="3.04" fill="#d41818" stroke="#8a0e0e" stroke-width="0.6"/><circle cx="20.5" cy="3" r="3.04" fill="#d41818" stroke="#8a0e0e" stroke-width="0.6"/><circle cx="20.5" cy="18" r="3.04" fill="#d41818" stroke="#8a0e0e" stroke-width="0.6"/><circle cx="3.5" cy="21" r="3.04" fill="#d41818" stroke="#8a0e0e" stroke-width="0.6"/></svg>
<div class="dd" style="left:1376.8px;top:101.0px"></div>
<svg class="abs" style="left:1389.6px;top:99.0px" width="9" height="8" viewBox="0 0 9 8"><path d="M0.8 0.8 L3.8 4 L0.8 7.2 M4.800 0.8 L7.800 4 L4.800 7.200" fill="none" stroke="#111" stroke-width="1.400"/></svg>
<div class="abs" style="left:1400.1px;top:86.0px;width:1px;height:33px;background:#c4c4c4"></div><div class="abs" style="left:1401.1px;top:86.0px;width:1px;height:33px;background:#fbfbfb"></div>
<div class="gr" style="left:1404.5px;top:90.0px"></div>
<svg class="ic" style="left:1414.5px;top:90.5px" viewBox="0 0 24 24"><rect x="13" y="2" width="8.500" height="8.500" rx="1" fill="#d01c1c" stroke="#a01010" stroke-width=".8"/><circle cx="19.500" cy="4" r="3.200" fill="#d83030" stroke="#f4c0c0" stroke-width=".9"/><rect x="15" y="4.500" width="3.500" height="3.500" fill="none" stroke="#f4c8c8" stroke-width=".9"/><rect x="2.500" y="13" width="8.500" height="8.500" rx="1" fill="#fdf0f0" stroke="#cc1414" stroke-width="1.500"/><circle cx="10" cy="13" r="3.200" fill="#d42020" stroke="#a01010" stroke-width=".6"/><rect x="4.800" y="15.300" width="3.800" height="3.800" fill="none" stroke="#cc1414" stroke-width="1"/><path d="M5 9.500 Q5.500 6 9 5.500" fill="none" stroke="#7c7c7c" stroke-width="1.600"/><path d="M19.500 14.500 Q19 18 15.500 18.500 M17.500 20 L15 18.500 L17 16.500" fill="none" stroke="#7c7c7c" stroke-width="1.500"/></svg>
<div class="gr" style="left:4.5px;top:124.5px"></div>
<svg class="ic" style="left:14px;top:125px" viewBox="0 0 24 24"><circle cx="12" cy="12" r="3.800" fill="#cc1414" stroke="#7d0c0c" stroke-width=".6"/></svg>
<svg class="ic" style="left:45px;top:125px" viewBox="0 0 24 24"><path d="M8.500 22 Q5.500 5 21.500 3.500" fill="none" stroke="#7d0c0c" stroke-width="2.900" stroke-linecap="round"/><path d="M8.500 22 Q5.500 5 21.500 3.500" fill="none" stroke="#cc1414" stroke-width="2.100" stroke-linecap="round"/><circle cx="10" cy="7.500" r="4.700" fill="#cc1414" stroke="#7d0c0c" stroke-width=".6"/></svg>
<svg class="ic" style="left:76px;top:125px" viewBox="0 0 24 24"><path d="M12 .5 V23.500" fill="none" stroke="#7d0c0c" stroke-width="4.8"/><path d="M12 .5 V23.500" fill="none" stroke="#cc1414" stroke-width="4"/></svg>
<svg class="ic" style="left:107px;top:125px" viewBox="0 0 24 24"><path d="M1 12 H23" fill="none" stroke="#7d0c0c" stroke-width="5.1"/><path d="M1 12 H23" fill="none" stroke="#cc1414" stroke-width="4.3"/></svg>
<svg class="ic" style="left:138px;top:125px" viewBox="0 0 24 24"><path d="M1.500 17 L16.500 2" fill="none" stroke="#7d0c0c" stroke-width="4.6"/><path d="M1.500 17 L16.500 2" fill="none" stroke="#cc1414" stroke-width="3.8"/><path d="M7 22 L22 7" fill="none" stroke="#7d0c0c" stroke-width="4.6"/><path d="M7 22 L22 7" fill="none" stroke="#cc1414" stroke-width="3.8"/></svg>
<svg class="ic" style="left:169px;top:125px" viewBox="0 0 24 24"><path d="M12.500 2.500 V17.500" fill="none" stroke="#7d0c0c" stroke-width="5.3999999999999995"/><path d="M12.500 2.500 V17.500" fill="none" stroke="#cc1414" stroke-width="4.6"/><path d="M1.500 19 H23.500" fill="none" stroke="#7d0c0c" stroke-width="5.8"/><path d="M1.500 19 H23.500" fill="none" stroke="#cc1414" stroke-width="5"/></svg>
<svg class="ic" style="left:200px;top:125px" viewBox="0 0 24 24"><path d="M7 2 L22 17.500" fill="none" stroke="#7d0c0c" stroke-width="4.8"/><path d="M7 2 L22 17.500" fill="none" stroke="#cc1414" stroke-width="4"/><path d="M2.500 8.500 Q13 8 16.500 21.500" fill="none" stroke="#7d0c0c" stroke-width="3.600"/><path d="M2.500 8.500 Q13 8 16.500 21.500" fill="none" stroke="#cc1414" stroke-width="2.800"/></svg>
<svg class="ic" style="left:231px;top:125px" viewBox="0 0 24 24"><path d="M4.500 7.500 H20" fill="none" stroke="#7d0c0c" stroke-width="5.0"/><path d="M4.500 7.500 H20" fill="none" stroke="#cc1414" stroke-width="4.2"/><path d="M4.500 16.500 H20" fill="none" stroke="#7d0c0c" stroke-width="5.0"/><path d="M4.500 16.500 H20" fill="none" stroke="#cc1414" stroke-width="4.2"/></svg>
<svg class="ic" style="left:262px;top:125px" viewBox="0 0 24 24"><path d="M1.200 4.300 L10.600 12 L1.200 20.600 L1.200 15.800 L4.600 12.200 L1.200 9 Z M22.600 4.300 L13.200 12 L22.600 20.600 L22.600 15.800 L19.200 12.200 L22.600 9 Z" fill="#cc1414" stroke="#7d0c0c" stroke-width=".7"/></svg>
<svg class="ic" style="left:293px;top:125px" viewBox="0 0 24 24"><circle cx="12" cy="12" r="8.200" fill="#fff" stroke="#0c0c0c" stroke-width="4.400"/><circle cx="12" cy="12" r="8.200" fill="none" stroke="#cc1414" stroke-width="2.200"/><path d="M6.500 8 L17.500 16" stroke="#0c0c0c" stroke-width="4"/><path d="M6 7.600 L18 16.400" stroke="#cc1414" stroke-width="2.200"/></svg>
<div class="abs" style="left:322.9px;top:125px;width:1px;height:24px;background:#c8c8c8"></div>
<svg class="ic" style="left:329.8px;top:125px" viewBox="0 0 24 24"><path d="M7.500 11 V7.500 Q7.500 2.500 12 2.500 Q16.500 2.500 16.500 7.500 V11" fill="none" stroke="#7d0c0c" stroke-width="3.600"/><path d="M7.500 11 V7.500 Q7.500 2.500 12 2.500 Q16.500 2.500 16.500 7.500 V11" fill="none" stroke="#cc1414" stroke-width="2.600"/><rect x="4.500" y="10.500" width="15" height="12" rx="1" fill="#cc1414" stroke="#7d0c0c" stroke-width=".8"/><path d="M6 15 H18 M6 18.500 H18" stroke="#b01010" stroke-width="1"/></svg>
<svg class="ic" style="left:361px;top:125px" viewBox="0 0 24 24"><path d="M2.500 5.500 V18.500 M21.500 5.500 V18.500 M2.500 12 H21.500" fill="none" stroke="#7d0c0c" stroke-width="4.2"/><path d="M2.500 5.500 V18.500 M21.500 5.500 V18.500 M2.500 12 H21.500" fill="none" stroke="#cc1414" stroke-width="3.4"/></svg>
<svg class="ic" style="left:391.8px;top:125px" viewBox="0 0 24 24"><path d="M5.500 2.500 H18.500 M5.500 22 H18.500 M12 2.500 V22" fill="none" stroke="#7d0c0c" stroke-width="4.2"/><path d="M5.500 2.500 H18.500 M5.500 22 H18.500 M12 2.500 V22" fill="none" stroke="#cc1414" stroke-width="3.4"/></svg>
<svg class="ic" style="left:423px;top:125px" viewBox="0 0 24 24"><path d="M1.500 22.500 L4 13.500 L6.300 15.800 L16 6 L13.700 3.700 L22.500 1.500 L20.300 10.300 L18 8 L8.300 17.700 L10.600 20 Z" fill="#cc1414" stroke="#7d0c0c" stroke-width=".7"/></svg>
<svg class="ic" style="left:454px;top:125px" viewBox="0 0 24 24"><circle cx="12" cy="12.500" r="9.500" fill="none" stroke="#7d0c0c" stroke-width="3.400"/><circle cx="12" cy="12.500" r="9.500" fill="none" stroke="#cc1414" stroke-width="2.500"/><path d="M12 12.500 L18.500 5.500" stroke="#7d0c0c" stroke-width="3.400"/><path d="M12 12.500 L18.500 5.500" stroke="#cc1414" stroke-width="2.600"/></svg>
<div class="dd" style="left:484.2px;top:135.5px"></div>
<svg class="ic" style="left:497.5px;top:125px" viewBox="0 0 24 24"><path d="M22 2.500 L3 11 L22.500 22" fill="none" stroke="#7d0c0c" stroke-width="3.400" stroke-linejoin="miter"/><path d="M22 2.500 L3 11 L22.500 22" fill="none" stroke="#cc1414" stroke-width="2.500"/><path d="M16 5.500 Q20 12 17.500 19" fill="none" stroke="#7d0c0c" stroke-width="3.200"/><path d="M16 5.500 Q20 12 17.500 19" fill="none" stroke="#cc1414" stroke-width="2.400"/></svg>
<svg class="ic" style="left:528.5px;top:125px" viewBox="0 0 24 24"><path d="M1.500 12 H23" stroke="#9a9a9a" stroke-width="3"/><path d="M1.500 12 H23" stroke="#c4c4c4" stroke-width="1.600"/><path d="M3 2 L12 12 L15 23" fill="none" stroke="#a4a4a4" stroke-width="3.200" stroke-linecap="round"/><path d="M3 2 L12 12 L15 23" fill="none" stroke="#d2d2d2" stroke-width="1.800" stroke-linecap="round"/></svg>
<div class="abs" style="left:558.3px;top:125px;width:1px;height:24px;background:#c8c8c8"></div>
<svg class="ic" style="left:565px;top:125px" viewBox="0 0 24 24"><rect x="2.500" y="8" width="13" height="13" fill="#fff" stroke="#cc1414" stroke-width="2"/><path d="M10 8 V3 H20 V13 H15.500" fill="none" stroke="#2a5aa8" stroke-width="1.600"/></svg>
<div class="abs ui" style="left:412px;top:57.800px;width:145px;height:21.600px;background:#e1e1e1;border:1px solid #adadad"><svg class="abs" style="left:4px;top:1.5px" width="16" height="16" viewBox="3 2 18 18"><rect x="5" y="8" width="11" height="11" fill="none" stroke="#cc1414" stroke-width="1.8"/><circle cx="14.5" cy="8.5" r="5.2" fill="none" stroke="#cc1414" stroke-width="1.8"/></svg><span class="abs" style="left:22px;top:3.700px">Sketcher</span><div class="dd" style="left:130px;top:8px"></div></div></div><!--/tb-->
<!-- COMBO -->
<div id="combo">
<style>
.ui{font-family:"DejaVu Sans Condensed","Liberation Sans",sans-serif;font-size:10.650px;line-height:13px;white-space:nowrap}
.dockt{position:absolute;background:#dcdcdc;border:1px solid #b9b9b9;height:18px}
.cb{position:absolute;width:13px;height:13px;background:#fff;border:1px solid #333}
.cb.on:after{content:"";position:absolute;left:1.5px;top:2.2px;width:7px;height:3.5px;border-left:1.3px solid #1a1a1a;border-bottom:1.3px solid #1a1a1a;transform:rotate(-47deg)}
.btn{position:absolute;background:#e1e1e1;border:1px solid #adadad;text-align:center}
.box{position:absolute;left:12px;width:227px}
.boxh{position:absolute;left:0;top:0;width:227px;height:24px;border-radius:5px 5px 0 0;background:linear-gradient(to right,#ffffff 0,#f4f6fe 35%,#c9d4f8 100%)}
.boxh b{position:absolute;left:28px;top:7.500px;color:#2356c6;font-weight:bold;font-size:11.500px;letter-spacing:-0.100px}
.boxb{position:absolute;left:0;top:24px;width:227px;background:#d7dff7;border:1px solid #fff;border-top:none}
.chev{position:absolute;left:207px;top:4px;width:16px;height:16px;border-radius:8px;background:#fff;border:1px solid #c0c8e0}
.doc{position:absolute;left:9px;top:4px;width:14px;height:16px}
.grn{color:#1c8a34;font-size:12px}
</style>
<div class="ui">
<div class="dockt" style="left:1px;top:155px;width:268px"><span class="abs" style="left:0.5px;top:2.5px">Combo View</span>
<svg class="abs" style="left:253px;top:3px" width="11" height="11" viewBox="0 0 11 11"><path d="M3.5 1 H10 V6 H3.5 Z M3.5 2.5 H10" fill="none" stroke="#000" stroke-width="1.4"/><path d="M1 4.5 H7 V10 H1 Z" fill="#dcdcdc" stroke="#000" stroke-width="1.4"/></svg></div>
<!-- tabs -->
<div class="abs" style="left:3px;top:178px;width:49px;height:22px;background:#f0f0f0;border:1px solid #d9d9d9;border-bottom:none"><span class="abs" style="left:8.5px;top:3.800px">Model</span></div>
<div class="abs" style="left:51px;top:176px;width:72px;height:25px;background:#fff;border:1px solid #d9d9d9;border-bottom:none;z-index:2"><span class="abs" style="left:32.5px;top:5px">Tasks</span>
<svg class="abs" style="left:13px;top:3px" width="17" height="17" viewBox="0 0 17 17"><path d="M2.2 1.2 L5.2 0.2 L14 10.5 L15.6 15.2 L11 13.6 L2 3.3 Z" fill="#3a4a66" stroke="#1e2636" stroke-width="0.8"/><path d="M11.2 13.4 L14 10.6 L15.5 15.1 Z" fill="#e8e0d0" stroke="#444" stroke-width="0.5"/><path d="M3.4 2.2 L12.4 12.2" stroke="#7f93b5" stroke-width="1.2"/></svg></div>
<!-- panel -->
<div class="abs" id="tp" style="left:3px;top:200px;width:262.500px;height:547px;border:1px solid #828790;background:#fff;overflow:hidden">
<div class="abs" style="left:0;top:0;width:244px;height:545px;background:linear-gradient(to bottom,#a8a8c3 0,#8d8db0 50px,#5e5e90 150px,#3b3b73 250px,#313168 545px)"></div>
<!-- scrollbar -->
<div class="abs" style="left:244px;top:0;width:17px;height:545px;background:#f0f0f0">
<div class="abs" style="left:0;top:17px;width:17px;height:293px;background:#cdcdcd"></div>
<svg class="abs" style="left:4px;top:6px" width="9" height="6" viewBox="0 0 9 6"><path d="M0.7 5 L4.5 1.2 L8.3 5" fill="none" stroke="#505050" stroke-width="1.5"/></svg>
<svg class="abs" style="left:4px;top:534px" width="9" height="6" viewBox="0 0 9 6"><path d="M0.7 1 L4.5 4.8 L8.3 1" fill="none" stroke="#505050" stroke-width="1.5"/></svg>
</div>
</div>
<!-- contents (page coords) -->
<div class="abs" style="left:0;top:0;width:248px;height:746px;overflow:hidden">
<div class="btn" style="left:89px;top:220.500px;width:72.500px;height:20px"><span style="position:relative;top:3px">Close</span></div>
<!-- solver box -->
<div class="box" style="top:259px;height:158px"><div class="boxh"><b>Solver messages</b><svg class="doc" viewBox="0 0 14 16"><path d="M1 2 H10 L13 5 V15.5 H1 Z" fill="#ececec" stroke="#bdbdbd" stroke-width="1"/><circle cx="10.6" cy="3.4" r="2.6" fill="#f6d32e" stroke="#d9a400" stroke-width="0.8"/></svg><div class="chev"><svg class="abs" style="left:3px;top:2px" width="8" height="10" viewBox="0 0 8 10"><path d="M1 4.4 L4 1.4 L7 4.4 M1 8.6 L4 5.6 L7 8.6" fill="none" stroke="#1c2a5e" stroke-width="1.5"/></svg></div></div>
<div class="boxb" style="height:134px"></div></div>
<span class="abs grn" style="left:26px;top:299px">Fully constrained sketch</span>
<span class="abs grn" style="left:26px;top:318.600px">Solved in 0 sec</span>
<div class="cb" style="left:26px;top:339.5px"></div><span class="abs" style="left:44px;top:339.5px">Auto Remove Redundants</span>
<div class="cb" style="left:26px;top:385px"></div><span class="abs" style="left:44px;top:385.5px">Auto Update</span>
<div class="btn" style="left:130px;top:381px;width:94px;height:21px"><span style="position:relative;top:3.5px">Update</span></div>
<!-- edit controls -->
<div class="box" style="top:426px;height:25px"><div class="boxh"><b>Edit controls</b><svg class="doc" viewBox="0 0 14 16"><path d="M1 2 H10 L13 5 V15.5 H1 Z" fill="#ececec" stroke="#bdbdbd" stroke-width="1"/><circle cx="10.6" cy="3.4" r="2.6" fill="#f6d32e" stroke="#d9a400" stroke-width="0.8"/></svg><div class="chev"><svg class="abs" style="left:3px;top:2px" width="8" height="10" viewBox="0 0 8 10"><path d="M1 4.4 L4 1.4 L7 4.4 M1 8.6 L4 5.6 L7 8.6" fill="none" stroke="#1c2a5e" stroke-width="1.5"/></svg></div></div></div>
<!-- constraints -->
<div class="box" style="top:462px;height:290px"><div class="boxh"><b>Constraints</b><svg class="doc" viewBox="0 0 14 16"><path d="M1 2 H10 L13 5 V15.5 H1 Z" fill="#ececec" stroke="#bdbdbd" stroke-width="1"/><circle cx="10.6" cy="3.4" r="2.6" fill="#f6d32e" stroke="#d9a400" stroke-width="0.8"/></svg><div class="chev"><svg class="abs" style="left:3px;top:2px" width="8" height="10" viewBox="0 0 8 10"><path d="M1 4.4 L4 1.4 L7 4.4 M1 8.6 L4 5.6 L7 8.6" fill="none" stroke="#1c2a5e" stroke-width="1.5"/></svg></div></div>
<div class="boxb" style="height:266px"></div></div>
<span class="abs" style="left:25px;top:502.5px">Filter:</span>
<div class="abs" style="left:129px;top:500px;width:96px;height:19px;background:#e1e1e1;border:1px solid #adadad"><span class="abs" style="left:3px;top:2.5px">All</span><div class="dd" style="left:82px;top:7px"></div></div>
<div class="cb on" style="left:26px;top:527.5px"></div><span class="abs" style="left:43px;top:527.5px">Hide Internal Alignment</span>
<div class="cb" style="left:26px;top:550px"></div><span class="abs" style="left:43px;top:550.5px">Extended Information</span>
<!-- list -->
<div class="abs" id="clist" style="left:26px;top:571px;width:199px;height:180px;background:#fff;border:1px solid #828790;overflow:hidden;font-size:11.4px">
<div class="cb on" style="left:4px;top:4.0px"></div><svg class="abs" style="left:23px;top:2.5px" width="16" height="16" viewBox="0 0 16 16"><circle cx="8" cy="8" r="2.600" fill="#cc1414"/></svg><span class="abs" style="left:45.5px;top:4.9px">Constraint1</span>
<div class="cb on" style="left:4px;top:22.0px"></div><svg class="abs" style="left:23px;top:20.5px" width="16" height="16" viewBox="0 0 16 16"><circle cx="8" cy="8" r="2.600" fill="#cc1414"/></svg><span class="abs" style="left:45.5px;top:22.9px">Constraint2</span>
<div class="cb on" style="left:4px;top:40.0px"></div><svg class="abs" style="left:23px;top:38.5px" width="16" height="16" viewBox="0 0 16 16"><circle cx="8" cy="8" r="2.600" fill="#cc1414"/></svg><span class="abs" style="left:45.5px;top:40.9px">Constraint3</span>
<div class="cb on" style="left:4px;top:58.0px"></div><svg class="abs" style="left:23px;top:56.5px" width="16" height="16" viewBox="0 0 16 16"><circle cx="8" cy="8" r="2.600" fill="#cc1414"/></svg><span class="abs" style="left:45.5px;top:58.9px">Constraint4</span>
<div class="cb on" style="left:4px;top:76.0px"></div><svg class="abs" style="left:23px;top:74.5px" width="16" height="16" viewBox="0 0 16 16"><rect x="0.500" y="6.500" width="15" height="3" fill="#cc1414"/></svg><span class="abs" style="left:45.5px;top:76.9px">Constraint5</span>
<div class="cb on" style="left:4px;top:94.0px"></div><svg class="abs" style="left:23px;top:92.5px" width="16" height="16" viewBox="0 0 16 16"><rect x="0.500" y="6.500" width="15" height="3" fill="#cc1414"/></svg><span class="abs" style="left:45.5px;top:94.9px">Constraint6</span>
<div class="cb on" style="left:4px;top:112.0px"></div><svg class="abs" style="left:23px;top:110.5px" width="16" height="16" viewBox="0 0 16 16"><rect x="6.500" y="0.500" width="3" height="15" fill="#cc1414"/></svg><span class="abs" style="left:45.5px;top:112.9px">Constraint7</span>
<div class="cb on" style="left:4px;top:130.0px"></div><svg class="abs" style="left:23px;top:128.5px" width="16" height="16" viewBox="0 0 16 16"><rect x="6.500" y="0.500" width="3" height="15" fill="#cc1414"/></svg><span class="abs" style="left:45.5px;top:130.9px">Constraint8</span>
<div class="cb on" style="left:4px;top:148.0px"></div><svg class="abs" style="left:23px;top:146.5px" width="16" height="16" viewBox="0 0 16 16"><path d="M4 1.2 H12 M4 14.8 H12 M8 1.2 V14.8" stroke="#cc1414" stroke-width="2.600" fill="none"/></svg><span class="abs" style="left:45.5px;top:148.9px">Constraint9 (12.2 mm)</span>
<div class="cb on" style="left:4px;top:166.0px"></div><svg class="abs" style="left:23px;top:164.5px" width="16" height="16" viewBox="0 0 16 16"><path d="M1.2 3 V13 M14.8 3 V13 M1.2 8 H14.8" stroke="#cc1414" stroke-width="2.600" fill="none"/></svg><span class="abs" style="left:45.5px;top:166.9px">Constraint10 (12 mm)</span>
<div class="abs" style="left:181px;top:0;width:17px;height:180px;background:#f0f0f0"><div class="abs" style="left:0;top:18px;width:15px;height:128px;background:#cdcdcd"></div>
<svg class="abs" style="left:3px;top:7px" width="9" height="6" viewBox="0 0 9 6"><path d="M0.7 5 L4.5 1.2 L8.3 5" fill="none" stroke="#505050" stroke-width="1.5"/></svg></div>
</div>
</div>
</div>
</div>
<!-- VIEW3D -->
<div id="view">
<svg class="abs" style="left:273px;top:154px" width="1107" height="574" viewBox="273 154 1107 574">
<defs>
<linearGradient id="bg" x1="0" y1="0" x2="0" y2="1"><stop offset="0" stop-color="#333365"/><stop offset="1" stop-color="#9797ae"/></linearGradient>
</defs>
<rect x="273" y="154" width="1107" height="574" fill="url(#bg)"/>
<!-- red x axis (outside) -->
<rect x="273" y="435.700" width="126" height="2" fill="#d04e5c"/>
<rect x="1243" y="435.700" width="137" height="2" fill="#d04e5c"/>
<!-- solid shape -->
<path fill-rule="evenodd" fill="#0b53f7" stroke="#15151c" stroke-width="1.6" stroke-linejoin="round"
 d="M567 238.5 H1074.5 A971 971 0 0 1 1074.5 635 H1030.600 A34 34 0 0 0 962.600 635 H567 A19 19 0 0 1 548 616 V257.5 A19 19 0 0 1 567 238.5 Z
 M1055 383.500 A14.500 14.500 0 0 1 1069.500 398 V475 A14.500 14.500 0 0 1 1055 489.500 H1027 A11.800 11.800 0 0 1 1015.200 477.500 V473.500 A37 37 0 0 1 1015.200 399.500 V395.500 A11.800 11.800 0 0 1 1027 383.500 Z"/>
<!-- blue grid/axis lines -->
<g fill="#3b9bf5">
<rect x="398" y="154" width="2" height="574"/>
<rect x="820" y="154" width="2" height="574"/>
<rect x="1242" y="154" width="2" height="574"/>
<rect x="399" y="435.7" width="844" height="2"/>
</g>
<!-- green sketch rectangle -->
<g stroke="#00ff18" stroke-width="3" fill="none">
<path d="M546.4 374 V179.4 H1052.7 V613"/>
<path d="M809 693.7 H1052.7"/>
</g>
<circle cx="1052.7" cy="179.4" r="4.2" fill="#00ff18"/>
<circle cx="1052.7" cy="693.9" r="4.2" fill="#00ff18"/>
<!-- red/orange overlapped lines -->
<rect x="545" y="374" width="3" height="320" fill="#f02a10"/>
<rect x="546" y="374" width="1" height="320" fill="#d8c818"/>
<rect x="1051.300" y="613" width="2.800" height="80" fill="#f03a12"/>
<rect x="1052.200" y="613" width="1" height="80" fill="#d8c020"/>
<rect x="546" y="694.300" width="263" height="1.200" fill="#48ec38"/>
<!-- dimension lines -->
<g stroke="#ff2a14" stroke-width="2" fill="none">
<path d="M483.5 179.5 H546"/>
<path d="M483.5 693.5 H809"/>
<path d="M509.6 188 V388"/>
<path d="M509.6 487 V686"/>
<path d="M556 400.2 H640"/>
<path d="M727 400.2 H812"/>
<path d="M784.2 445 V520"/>
<path d="M784.2 609 V686"/>
<path d="M556 639.3 H759"/>
<path d="M841 639.3 H1043"/>
</g>
<g fill="#ff2a14">
<path d="M509.6 179.6 L516.2 191 H503 Z"/>
<path d="M509.6 693.6 L516.2 682.5 H503 Z"/>
<path d="M547.300 400.200 L558.300 393.400 V407 Z"/>
<path d="M820.7 400.2 L809.5 393.4 V407 Z"/>
<path d="M784.2 437 L790.8 448 H777.6 Z"/>
<path d="M784.2 693.6 L790.8 682.5 H777.6 Z"/>
<path d="M547.300 639.300 L558.300 632.500 V646.100 Z"/>
<path d="M1052 639.3 L1041 632.5 V646.1 Z"/>
</g>
<!-- dash-dot construction -->
<path d="M820.8 378 V431" stroke="#ff2a14" stroke-width="1.8" stroke-dasharray="8 3 1.5 3" fill="none"/>
<path d="M758 436.7 H816" stroke="#ff2a14" stroke-width="1.8" stroke-dasharray="5 3 8 3 1.5 3" fill="none"/>
<!-- origin point -->
<circle cx="821" cy="436.7" r="3.2" fill="#20e040"/>
<path d="M821 432 V441.5 M816.5 436.7 H825.5" stroke="#e8a020" stroke-width="1"/>
<!-- constraint icons -->
<g fill="#ff2a14">
<rect x="791.8" y="164.3" width="14" height="2"/>
<rect x="791.8" y="707.4" width="14" height="2"/>
<rect x="531" y="431" width="2" height="13"/>
<rect x="1065.8" y="430" width="2" height="14"/>
</g>
<!-- dimension text -->
<g font-family="'Liberation Sans',sans-serif" font-size="23" fill="#ff2a14">
<text x="647" y="408.3" textLength="73" lengthAdjust="spacingAndGlyphs">6.5 mm</text>
<text x="768.5" y="647.5" textLength="65" lengthAdjust="spacingAndGlyphs">12 mm</text>
<text transform="translate(518.3 479) rotate(-90)" textLength="87" lengthAdjust="spacingAndGlyphs">12.2 mm</text>
<text transform="translate(792.3 601.5) rotate(-90)" textLength="73" lengthAdjust="spacingAndGlyphs">6.1 mm</text>
</g>
<!-- X_Axis label -->
<text x="407.300 439.900 463.500 497.500 519 528.500" y="423.200" font-family="'Liberation Serif',serif" font-size="46" fill="#3b9ef6" stroke="#3b9ef6" stroke-width="0.500" transform="translate(0 423.200) scale(1 1.075) translate(0 -423.200)">X_Axis</text>
<!-- 0.40 mm labels -->
<g font-family="'Liberation Serif',serif" font-size="16" fill="#fff" stroke="#fff" stroke-width="0.350">
<text x="546.500" y="187.800" textLength="64.500" lengthAdjust="spacingAndGlyphs">0.40 mm</text>
<text x="546.500" y="685.900" textLength="64.500" lengthAdjust="spacingAndGlyphs">0.40 mm</text>
</g>
<g stroke="#fff" stroke-width="1" fill="none">
<path d="M546.400 181 V196" stroke="#d8d8d8" stroke-width="1.600"/><path d="M542 172.500 L551 181 M551 172.500 L542 181"/>
<path d="M542 192.5 L551 201 M551 192.5 L542 201"/>
<path d="M542 673.5 L546 678 L542 682.5"/>
<path d="M542 689.5 L551 698 M551 689.5 L542 698"/>
</g>
<circle cx="546.4" cy="694" r="2.4" fill="#00ff18"/>
<!-- NAVCUBE -->
<g id="nav">
<g fill="#e4e8f2" fill-opacity="0.93">
<path d="M1296.7 162 L1305.8 171 H1288 Z"/>
<path d="M1296.7 312 L1305.8 303.5 H1288 Z"/>
<path d="M1222 237 L1231 228.3 V245.8 Z"/>
<path d="M1371.8 237 L1363.2 228.3 V245.8 Z"/>
<path d="M1274 169.300 L1276.400 174.700 Q1264 179.500 1254.600 187.400 L1257.300 190.700 L1243.200 194 L1246 180.800 L1249.200 183.600 Q1260.500 174 1274 169.300 Z"/>
<path d="M1320 169.300 L1317.600 174.700 Q1330 179.500 1339.400 187.400 L1336.700 190.700 L1350.800 194 L1348 180.800 L1344.800 183.600 Q1333.500 174 1320 169.300 Z"/>
</g>
<rect x="1259.5" y="199.5" width="75.5" height="75.5" rx="17" ry="17" fill="#dfe3f0"/>
<rect x="1262.5" y="202.5" width="69.5" height="69.5" rx="15" ry="15" fill="#eceef6"/>
<rect x="1268.5" y="208.5" width="57.5" height="60" rx="7" ry="7" fill="#f9f9fb"/>
<path d="M1281 213 H1313 M1273 221 V256 M1322 221 V256" stroke="#dcdde4" stroke-width="1.2" fill="none"/>
<path d="M1281 262.3 H1313" stroke="#e6b4b4" stroke-width="1.2"/>
<text x="1282.5" y="243" font-family="'Liberation Sans',sans-serif" font-size="18.5" fill="#1c1c1c" textLength="30" lengthAdjust="spacingAndGlyphs">Top</text>
<path d="M1262 274 L1270 266" stroke="#3040e0" stroke-width="1"/>
<text x="1256.5" y="280.5" font-family="'Liberation Sans',sans-serif" font-size="9" fill="#2838e8">z</text>
<!-- mini cube -->
<path d="M1334.5 284 L1345.5 289 V302 L1334.5 306.5 L1323.5 302 V289 Z" fill="#e8e8e8"/>
<path d="M1334.5 294 L1345.5 289 V302 L1334.5 306.5 Z" fill="#f4f4f4"/>
<path d="M1334.5 294 L1323.5 289 V302 L1334.5 306.5 Z" fill="#c9c9c9"/>
<path d="M1350 291 H1364 L1357 298.5 Z" fill="#3a3a44"/>
</g>
<!-- axis cross -->
<g font-family="'Liberation Sans',sans-serif" font-size="9.500" fill="#08080c">
<text x="1353.500" y="679.800">Y</text><text x="1353.700" y="699.900">Z</text><text x="1373.700" y="699.900">X</text>
</g>
<path d="M1350.5 699 V681" stroke="#20a030" stroke-width="1" stroke-dasharray="2 1"/>
<path d="M1350.5 699 H1369" stroke="#c03030" stroke-width="1"/>
<path d="M1350.5 696 L1353 699 L1350.5 702 L1348 699 Z" fill="#2030c0"/>
</svg>
</div>
<!-- TABS -->
<div id="tabs">
<style>
.tab{position:absolute;top:728px;height:22px;background:#f0f0f0;border:1px solid #d9d9d9;border-top:none}
.tab.act{background:#fff;height:24px;border-color:#d9d9d9}
.tab span{position:absolute;top:5px}
.tabx{position:absolute;top:4.5px;width:13.5px;height:13.5px;border-radius:2.5px;background:#c6c6c6;border:1px solid #a9a9a9}
.tabx.r{background:#e8502c;border-color:#b83414}
.inp{position:absolute;left:1388px;width:70px;height:20px;background:#fff;border:1px solid #7a7a7a}
.inp span{position:absolute;right:11.500px;top:3px;font-size:11px}
.rbtn{position:absolute;left:1389px;width:70px;height:34px;background:#e1e1e1;border:1px solid #adadad}
.mono{font-family:"Liberation Mono",monospace;font-size:13.33px;line-height:16px;white-space:pre;position:absolute;left:4.200px;color:#111}
.mono i{font-style:normal;color:#a0a0a0}
.mono u{text-decoration:none;color:#ff0000}
.mono b{color:#0000ff}
</style>
<div class="ui">
<svg width="0" height="0" style="position:absolute"><defs>
<g id="fc"><path d="M1 1 H10 V4.200 H5 V6.800 H8.500 V9.800 H5 V16.500 H1 Z" fill="#e01414" stroke="#8c0d0d" stroke-width="0.700"/><path d="M1.700 1.700 H9.400 V2.500 H2.600 V16 H1.700 Z" fill="#ff5a4a" opacity=".7"/><g transform="translate(11.200 11.100)"><circle r="4.300" fill="#4a70c0"/><g stroke="#4a70c0" stroke-width="2.200"><path d="M0 -5.800 V5.800 M-5.800 0 H5.800 M-4.100 -4.100 L4.100 4.100 M-4.100 4.100 L4.100 -4.100"/></g><circle r="3.100" fill="#5f86d2"/><circle r="1.600" fill="#fbfcfe"/></g></g>
<g id="tx"><path d="M3 3 L9.5 9.5 M9.5 3 L3 9.5" stroke="#fff" stroke-width="1.9" fill="none"/></g>
</defs></svg>
<!-- tabs -->
<div class="tab" style="left:275px;width:113px"><svg class="abs" style="left:10px;top:3px" width="15.500" height="15.500" viewBox="0 0 17 17"><use href="#fc"/></svg><span style="left:29px">Start page</span><div class="tabx" style="left:85px"><svg width="12.5" height="12.5" viewBox="0 0 12.5 12.5" style="position:absolute;left:-0.5px;top:-0.5px"><use href="#tx"/></svg></div></div>
<div class="tab" style="left:387px;width:155px"><svg class="abs" style="left:13px;top:3px" width="15.500" height="15.500" viewBox="0 0 17 17"><use href="#fc"/></svg><span style="left:32px">Doorbell Holder : 1</span><div class="tabx" style="left:126px"><svg width="12.5" height="12.5" viewBox="0 0 12.5 12.5" style="position:absolute;left:-0.5px;top:-0.5px"><use href="#tx"/></svg></div></div>
<div class="tab" style="left:541px;width:137px"><svg class="abs" style="left:11px;top:3px" width="15.500" height="15.500" viewBox="0 0 17 17"><use href="#fc"/></svg><span style="left:30px">Unnamed1 : 1*</span><div class="tabx" style="left:108.5px"><svg width="12.5" height="12.5" viewBox="0 0 12.5 12.5" style="position:absolute;left:-0.5px;top:-0.5px"><use href="#tx"/></svg></div></div>
<div class="tab act" style="left:677px;width:161px"><svg class="abs" style="left:12.5px;top:4px" width="15.500" height="15.500" viewBox="0 0 17 17"><use href="#fc"/></svg><span style="left:32px;top:6px;font-size:11.100px">tomu_0.4_case : 1*</span><div class="tabx r" style="left:133px;top:5.5px"><svg width="12.5" height="12.5" viewBox="0 0 12.5 12.5" style="position:absolute;left:-0.5px;top:-0.5px"><use href="#tx"/></svg></div></div>
<!-- right dock -->
<div class="dockt" style="left:1384px;top:155px;width:70px"><span class="abs" style="left:0.500px;top:2.500px">kicad ...</span>
<svg class="abs" style="left:45px;top:3px" width="11" height="11" viewBox="0 0 11 11"><path d="M3.5 1 H10 V6 H3.5 Z M3.5 2.5 H10" fill="none" stroke="#000" stroke-width="1.4"/><path d="M1 4.5 H7 V10 H1 Z" fill="#dcdcdc" stroke="#000" stroke-width="1.4"/></svg></div>
<div class="abs" style="left:1392px;top:181px;width:26px;height:26px;background:#e1e1e1;border:1px solid #adadad"><svg class="abs" style="left:5px;top:5px" width="15" height="15" viewBox="0 0 15 15"><path d="M1.5 7.5 L13.5 1.5 V13.5 Z" fill="#8a8a8a"/></svg></div>
<div class="abs" style="left:1424px;top:181px;width:26px;height:26px;background:#e1e1e1;border:1px solid #adadad"><div class="abs" style="left:4px;top:4px;width:20px;height:14px;background:linear-gradient(135deg,#fff,#ddd);border:1px solid #bbb;box-shadow:1px 2px 1px #555"></div></div>
<div class="inp" style="top:220px"><span>90</span></div>
<div class="inp" style="top:261px"><span>90</span></div>
<div class="inp" style="top:302px"><span>90</span></div>
<div class="inp" style="top:340px"><span>0.10</span></div>
<div class="inp" style="top:381px"><span>0.10</span></div>
<div class="inp" style="top:422px"><span>0.10</span></div>
<div class="rbtn" style="top:457.5px" id="rb1"><svg class="abs" style="left:13px;top:2px" width="29" height="29" viewBox="0 0 29 29"><rect x="3" y="9.500" width="22" height="12" rx="1.500" fill="#fdfdfd" stroke="#c9c9c9" stroke-width=".7"/><path d="M3 13.500 Q5.500 15.500 3 17.500" fill="none" stroke="#999" stroke-width=".8"/><g fill="#19e22c" stroke="#0c8c18" stroke-width=".8"><rect x="6.500" y="21.500" width="3.600" height="5"/><rect x="12.700" y="21.500" width="3.600" height="5"/><rect x="19" y="21.500" width="3.600" height="5"/><rect x="19.500" y="4.500" width="3.600" height="5"/></g><g transform="translate(2 1.500)"><path d="M0 2.500 Q8 -1 13.500 5.500 L16 3.500 L16.500 11.500 L8.500 10.500 L11 8.500 Q7 4.500 1.500 6.500 Z" fill="#7fd320" stroke="#2f6e10" stroke-width="0.9"/></g></svg></div>
<div class="rbtn" style="top:496px" id="rb2"><svg class="abs" style="left:13px;top:2px" width="29" height="29" viewBox="0 0 29 29"><g fill="#d8d8d8" stroke="#444" stroke-width=".8"><rect x="5" y="2.500" width="4.500" height="4"/><rect x="12" y="2.500" width="4.500" height="4"/><rect x="19" y="2.500" width="4.500" height="4"/></g><rect x="2.500" y="6" width="24" height="14" rx="1" fill="#4a4a4e" stroke="#222" stroke-width=".8"/><path d="M15 9 H25.500 V18.500 H15 Z" fill="#3c78d0" stroke="#1c4690" stroke-width=".8"/><path d="M15 9 L17 7.500 H26.500 L25.500 9" fill="#78a8ec"/><g transform="translate(4.500 15.500) scale(1.200 1)"><path d="M0 2.500 Q8 -1 13.500 5.500 L16 3.500 L16.500 11.500 L8.500 10.500 L11 8.500 Q7 4.500 1.500 6.500 Z" fill="#7fd320" stroke="#2f6e10" stroke-width="0.9"/></g></svg></div>
<div class="rbtn" style="top:534.5px" id="rb3"><svg class="abs" style="left:13px;top:2px" width="29" height="29" viewBox="0 0 29 29"><path d="M2 15 L14 9.500 L31 14 V21 L15 28.500 L2 22 Z" fill="#e8b820" stroke="#8c6a08" stroke-width=".9"/><path d="M2 15 L14 9.500 L31 14 L15 20.500 Z" fill="#f8d838" stroke="#8c6a08" stroke-width=".8"/><path d="M15 20.500 V28.500" stroke="#8c6a08" stroke-width=".8"/><g transform="translate(1.500 0)"><path d="M0 2.500 Q8 -1 13.500 5.500 L16 3.500 L16.500 11.500 L8.500 10.500 L11 8.500 Q7 4.500 1.500 6.500 Z" fill="#7fd320" stroke="#2f6e10" stroke-width="0.9"/></g></svg></div>
<div class="rbtn" style="top:573px" id="rb4"><svg class="abs" style="left:13px;top:2px" width="29" height="29" viewBox="0 0 29 29"><path d="M5 6 V22 Q5 26 14 26 Q23 26 23 22 V6 Z" fill="#e8bc20" stroke="#8c6a08" stroke-width=".9"/><ellipse cx="14" cy="6" rx="9" ry="3.500" fill="#f8dc48" stroke="#8c6a08" stroke-width=".9"/><g transform="translate(9 15.500)"><path d="M0 2.500 Q8 -1 13.500 5.500 L16 3.500 L16.500 11.500 L8.500 10.500 L11 8.500 Q7 4.500 1.500 6.500 Z" fill="#7fd320" stroke="#2f6e10" stroke-width="0.9"/></g></svg></div>
<div class="rbtn" style="top:611px" id="rb5"><svg class="abs" style="left:13px;top:2px" width="29" height="29" viewBox="0 0 29 29"><rect x="3" y="2.500" width="23" height="24" rx="1" fill="#eeeeee" stroke="#c4c4c4" stroke-width=".9"/><path d="M6 6.500 H23" stroke="#d4d4d4" stroke-width="1"/><path d="M6.500 11.500 L11 7.500 L21.500 19 L23.500 24.500 L17.500 22.500 Z" fill="#e8c428" stroke="#6e5608" stroke-width=".9"/><path d="M8.500 10 L19.500 21 M10 8.500 L21 19.500" stroke="#8c6e0a" stroke-width=".8"/><path d="M17.500 22.500 L21.500 19 L23.500 24.500 Z" fill="#f4e6c8" stroke="#6e5608" stroke-width=".6"/><path d="M21.700 22.700 L23.500 24.500 L22.700 21.800 Z" fill="#222"/></svg></div>
<!-- console -->
<div class="dockt" style="left:1px;top:757.5px;width:1443px"><span class="abs" style="left:0.300px;top:2.500px">Python console</span>
<svg class="abs" style="left:1412px;top:3px" width="11" height="11" viewBox="0 0 11 11"><path d="M3.5 1 H10 V6 H3.5 Z M3.5 2.5 H10" fill="none" stroke="#000" stroke-width="1.4"/><path d="M1 4.5 H7 V10 H1 Z" fill="#dcdcdc" stroke="#000" stroke-width="1.4"/></svg>
<svg class="abs" style="left:1429px;top:4px" width="10" height="10" viewBox="0 0 10 10"><path d="M1 1 L9 9 M9 1 L1 9" stroke="#000" stroke-width="1.7"/></svg></div>
<div class="abs" style="left:1px;top:778px;width:1443px;height:103px;background:#fff;border:1px solid #a0a0a0;border-top-color:#6e7480">
<div class="mono" style="top:1.5px"><i>&gt;&gt;&gt; </i></div>
<div class="mono" style="top:17.5px"><i>&gt;&gt;&gt; </i>ActiveSketch <i>=</i> App<i>.</i>ActiveDocument<i>.</i>getObject<i>(</i><u>'Sketch'</u><i>)</i></div>
<div class="mono" style="top:33.5px"><i>&gt;&gt;&gt; </i><b>if</b> ActiveSketch<i>.</i>ViewObject<i>.</i>RestoreCamera<i>:</i></div>
<div class="mono" style="top:49.5px"><i>&gt;&gt;&gt; </i>  ActiveSketch<i>.</i>ViewObject<i>.</i>TempoVis<i>.</i>saveCamera<i>()</i></div>
<div class="mono" style="top:65.5px"><i>&gt;&gt;&gt; </i></div>
<div class="mono" style="top:81.5px"><i>&gt;&gt;&gt; </i></div>
<div class="abs" style="left:1424px;top:0;width:17px;height:101px;background:#f0f0f0"><div class="abs" style="left:0;top:66px;width:17px;height:20px;background:#cdcdcd"></div>
<svg class="abs" style="left:4px;top:6px" width="9" height="6" viewBox="0 0 9 6"><path d="M0.7 5 L4.5 1.2 L8.3 5" fill="none" stroke="#505050" stroke-width="1.5"/></svg>
<svg class="abs" style="left:4px;top:91px" width="9" height="6" viewBox="0 0 9 6"><path d="M0.7 1 L4.5 4.8 L8.3 1" fill="none" stroke="#505050" stroke-width="1.5"/></svg></div>
</div>
<!-- status -->
<div class="abs" style="left:1218px;top:886px;width:1px;height:22px;background:#d4d4d4"></div>
<div class="abs" style="left:1299px;top:886px;width:1px;height:22px;background:#d4d4d4"></div>
<div class="abs" style="left:1425px;top:886px;width:1px;height:22px;background:#d4d4d4"></div>
<svg class="abs" style="left:1240px;top:889px" width="10" height="14" viewBox="0 0 10 14"><rect x="1" y="1" width="8" height="12" rx="3" ry="3" fill="#fff" stroke="#222" stroke-width="1.4"/><path d="M5 3 V6" stroke="#222" stroke-width="1.3"/></svg>
<span class="abs" style="left:1258px;top:889.5px;font-family:'Liberation Sans',sans-serif;font-size:12px;letter-spacing:-0.3px">CAD</span><div class="dd" style="left:1283.5px;top:895px"></div>
<span class="abs" style="left:1304.5px;top:889.5px;font-family:'Liberation Sans',sans-serif;font-size:12px;letter-spacing:-0.270px">26.24 mm x 13.61 mm</span>
<svg class="abs" style="left:1430px;top:897px" width="12" height="12" viewBox="0 0 12 12"><g fill="#b8b8b8"><rect x="9" y="9" width="2" height="2"/><rect x="9" y="5" width="2" height="2"/><rect x="5" y="9" width="2" height="2"/><rect x="9" y="1" width="2" height="2"/><rect x="5" y="5" width="2" height="2"/><rect x="1" y="9" width="2" height="2"/></g></svg>
</div>
</div>
<!-- RIGHT -->
<div id="right"></div>
<!-- CONSOLE -->
<div id="console"></div>
<!-- STATUS -->
<div id="status"></div>
<!-- SCRIBBLE -->
<div id="scribble"><svg class="abs" style="left:560px;top:30px;z-index:20" width="770" height="130" viewBox="560 30 770 130"><path fill="#ff0000" fill-rule="evenodd" d="M800.0 36.6 C786.4 36.3 770.2 34.6 761.0 34.7 C751.8 34.9 750.8 36.4 745.0 37.5 C739.2 38.6 734.7 40.0 726.0 41.6 C717.3 43.2 704.0 45.5 693.0 47.4 C682.0 49.3 670.8 51.2 659.7 53.3 C648.6 55.4 636.1 57.9 626.4 60.0 C616.7 62.1 607.9 63.5 601.5 65.7 C595.1 67.9 592.1 70.0 588.2 73.2 C584.3 76.4 581.1 80.4 578.3 84.8 C575.5 89.2 573.1 95.4 571.6 99.8 C570.1 104.2 569.1 107.5 569.1 111.4 C569.1 115.3 570.1 119.1 571.6 123.0 C573.1 126.9 575.5 131.1 578.3 134.7 C581.1 138.3 584.1 141.8 588.2 144.6 C592.4 147.4 596.8 149.7 603.2 151.3 C609.6 152.9 614.3 153.7 626.4 154.3 C638.5 154.9 648.7 154.8 676.0 154.8 C703.3 154.8 753.5 154.5 790.0 154.4 C826.5 154.3 860.0 154.4 895.0 154.2 C930.0 154.0 965.0 153.8 1000.0 153.4 C1035.0 153.0 1076.7 152.1 1105.0 151.6 C1133.3 151.1 1149.8 150.8 1170.0 150.5 C1190.2 150.2 1208.7 150.2 1226.4 149.9 C1244.1 149.6 1264.4 149.7 1276.3 148.8 C1288.2 147.9 1292.4 147.0 1297.9 144.6 C1303.4 142.2 1306.3 138.8 1309.5 134.6 C1312.7 130.4 1315.4 125.0 1317.0 119.7 C1318.6 114.4 1319.4 108.5 1319.0 103.0 C1318.6 97.5 1316.9 91.5 1314.5 86.5 C1312.1 81.5 1308.7 77.0 1304.5 73.2 C1300.3 69.5 1295.7 66.5 1289.6 64.0 C1283.5 61.5 1275.8 59.7 1268.0 58.2 C1260.2 56.7 1252.7 55.9 1243.0 55.2 C1233.3 54.5 1222.0 54.2 1209.8 54.1 C1197.6 54.0 1187.4 54.9 1170.0 54.6 C1152.6 54.3 1125.0 53.4 1105.5 52.4 C1086.0 51.4 1070.5 50.1 1053.0 48.9 C1035.5 47.7 1017.9 46.5 1000.4 45.3 C982.9 44.1 965.3 42.9 947.8 41.8 C930.3 40.7 912.7 39.6 895.2 38.7 C877.7 37.8 858.5 37.0 842.6 36.6 C826.7 36.2 813.6 36.9 800.0 36.6 Z M800.0 70.0 C786.1 70.5 771.6 71.5 759.3 72.4 C747.0 73.4 737.0 74.3 726.0 75.7 C715.0 77.1 704.0 78.9 693.0 80.7 C682.0 82.5 670.8 84.4 659.7 86.5 C648.6 88.6 634.7 91.2 626.4 93.1 C618.1 95.0 613.7 96.3 609.8 98.1 C605.9 99.9 604.2 102.1 602.8 104.0 C601.4 105.9 601.3 107.9 601.5 109.7 C601.7 111.5 602.0 113.4 604.0 114.9 C606.0 116.4 608.1 117.9 613.2 118.9 C618.3 119.9 624.3 120.5 634.8 121.0 C645.3 121.5 661.1 122.0 676.3 122.2 C691.5 122.4 707.0 122.5 726.0 122.2 C745.0 121.9 761.8 120.7 790.0 120.4 C818.2 120.2 860.0 120.9 895.0 120.7 C930.0 120.5 964.9 119.9 1000.0 119.4 C1035.1 119.0 1077.2 118.4 1105.5 118.0 C1133.8 117.6 1149.8 117.3 1170.0 117.0 C1190.2 116.7 1210.1 116.7 1226.4 116.4 C1242.7 116.2 1258.4 116.2 1268.0 115.5 C1277.6 114.8 1280.8 114.2 1283.8 112.5 C1286.8 110.8 1286.6 107.9 1286.2 105.5 C1285.8 103.1 1284.3 100.2 1281.3 98.1 C1278.3 96.0 1274.4 94.6 1268.0 93.1 C1261.6 91.6 1252.7 90.0 1243.0 89.0 C1233.3 88.0 1222.0 87.6 1209.8 87.3 C1197.6 87.0 1187.4 87.7 1170.0 87.3 C1152.6 86.9 1125.0 85.6 1105.5 84.7 C1086.0 83.8 1070.5 82.8 1053.0 81.8 C1035.5 80.8 1017.9 79.7 1000.4 78.6 C982.9 77.5 965.3 76.3 947.8 75.2 C930.3 74.1 912.7 73.0 895.2 72.1 C877.7 71.2 858.5 69.9 842.6 69.6 C826.7 69.2 813.9 69.5 800.0 70.0 Z"/></svg></div>
<div id="bord"></div>
</div>
</body>
</html>
